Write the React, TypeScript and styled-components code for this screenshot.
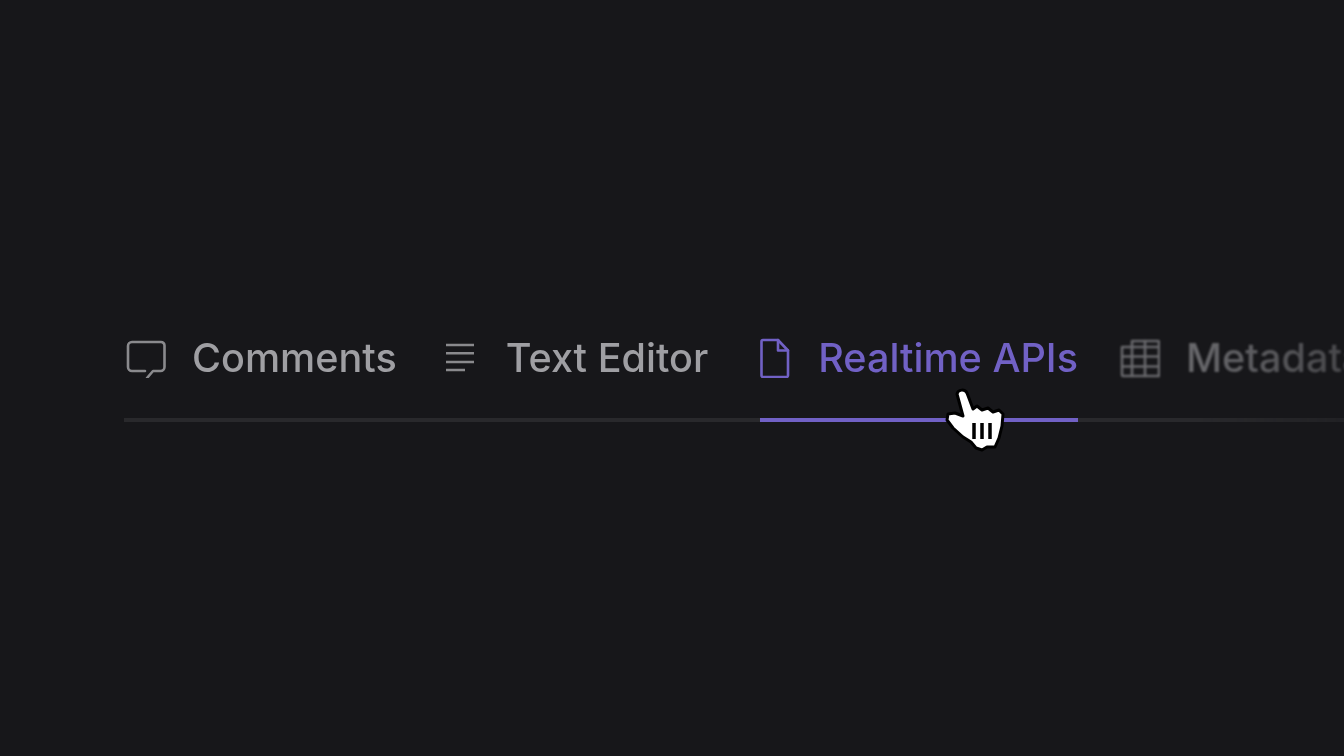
import styled, { createGlobalStyle } from "styled-components";

const GlobalStyle = createGlobalStyle`
  html, body {
    margin: 0;
    padding: 0;
    background: #17171a;
  }
`;

/* --- layout --- */

const Page = styled.main`
  position: relative;
  width: 1344px;
  height: 756px;
  overflow: hidden;
  background: #17171a;
  font-family: Inter, "Liberation Sans", sans-serif;
`;

const TabList = styled.nav`
  display: flex;
  width: 1220px;
  margin-left: 124px;
  padding-top: 336px;
  border-bottom: 4px solid #29292c;
  mask-image: linear-gradient(to right, #000 88%, rgba(0, 0, 0, 0.6) 100%);
`;

const Tab = styled.div<{ $active?: boolean; $faded?: boolean; $offset?: number; $gap: number }>`
  display: flex;
  align-items: flex-start;
  flex-shrink: 0;
  gap: ${({ $gap }) => $gap}px;
  margin-left: ${({ $offset }) => $offset ?? 0}px;
  margin-bottom: -4px;
  padding-bottom: 38px;
  color: ${({ $active }) => ($active ? "#7161c5" : "#9f9fa3")};
  border-bottom: 4px solid ${({ $active }) => ($active ? "#7161c5" : "transparent")};
  filter: ${({ $faded }) => ($faded ? "blur(1px)" : "blur(0.3px)")};
  opacity: ${({ $faded }) => ($faded ? 0.6 : 1)};
`;

const Label = styled.span`
  font-size: 39.6px;
  font-weight: 500;
  line-height: 44px;
  white-space: nowrap;
`;

const Glyph = styled.svg`
  display: block;
  flex-shrink: 0;
  margin-top: 2px;
  fill: none;
  stroke: currentColor;
  stroke-width: 2.6;
  stroke-linecap: round;
  stroke-linejoin: round;
`;

const Pointer = styled.svg`
  position: absolute;
  left: 930px;
  top: 380px;
`;

/* --- component --- */

export default function App() {
  return (
    <Page>
      <GlobalStyle />
      <TabList>
        <Tab $gap={24}>
          <Glyph width="44" height="40" viewBox="0 0 44 40" opacity="0.85">
            <path d="M21 33H8a4 4 0 0 1-4-4V8a4 4 0 0 1 4-4h29a3.500 3.500 0 0 1 3.500 3.500V29a4 4 0 0 1-4 4H29l-6 7" />
          </Glyph>
          <Label>Comments</Label>
        </Tab>
        <Tab $gap={30} $offset={47}>
          <Glyph width="32" height="40" viewBox="0 0 32 40" opacity="0.85">
            <path strokeLinecap="butt" d="M2 7h28M2 15.300h28M2 24h28M2 32h19" />
          </Glyph>
          <Label>Text Editor</Label>
        </Tab>
        <Tab $active $gap={28} $offset={52}>
          <Glyph width="30" height="40" viewBox="0 0 30 40">
            <path d="M3 2h15l10 10.500V37.500a1.500 1.500 0 0 1-1.500 1.500h-23A1.500 1.500 0 0 1 1.500 37.500V3.500A1.500 1.500 0 0 1 3 2z" />
            <path d="M18 2v10.500h10" />
          </Glyph>
          <Label>Realtime APIs</Label>
        </Tab>
        <Tab $faded $gap={26} $offset={42}>
          <Glyph width="40" height="40" viewBox="0 0 40 40">
            <path d="M12 9V3h26a1 1 0 0 1 1 1v34H3a1 1 0 0 1-1-1V9h37" />
            <path d="M2 18.500h37M2 28.500h37M12 9v29M25 3v35" />
          </Glyph>
          <Label>Metadata</Label>
        </Tab>
      </TabList>
      <Pointer width="90" height="80" viewBox="0 0 90 80">
        <path
          d="M27 14C28 9 35 9 37 13L43 29L47 26L52 30L58 28L63 32L69 30L73 34L72 46L69 58L65 67L57 67L52 70L46 68L41 62L33 57L23 48L17 40L18 34L25 33L33 36Z"
          fill="#fff"
          stroke="#000"
          strokeWidth="3"
          strokeLinejoin="round"
        />
        <path d="M44 43v16M52 43v16M60 43v16" stroke="#000" strokeWidth="3.500" />
      </Pointer>
    </Page>
  );
}
